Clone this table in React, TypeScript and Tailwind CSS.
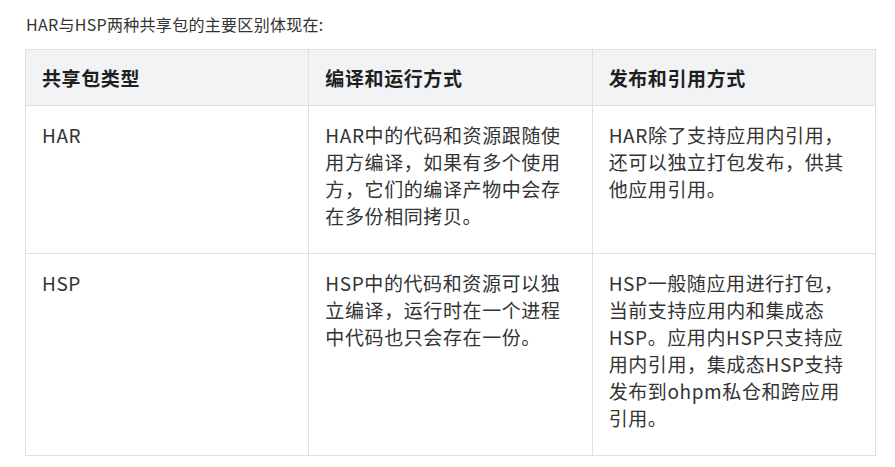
const FONT = "font-['Noto_Sans_CJK_SC','Noto_Sans',sans-serif]";

type Row = { kind: string; build: string[]; publish: string[] };

const rows: Row[] = [
  {
    kind: "HAR",
    build: [
      "HAR中的代码和资源跟随使",
      "用方编译，如果有多个使用",
      "方，它们的编译产物中会存",
      "在多份相同拷贝。",
    ],
    publish: ["HAR除了支持应用内引用，", "还可以独立打包发布，供其", "他应用引用。"],
  },
  {
    kind: "HSP",
    build: ["HSP中的代码和资源可以独", "立编译，运行时在一个进程", "中代码也只会存在一份。"],
    publish: [
      "HSP一般随应用进行打包，",
      "当前支持应用内和集成态",
      "HSP。应用内HSP只支持应",
      "用内引用，集成态HSP支持",
      "发布到ohpm私仓和跨应用",
      "引用。",
    ],
  },
];

function Lines({ lines }: { lines: string[] }) {
  return (
    <>
      {lines.map((line) => (
        <span key={line} className="block whitespace-nowrap">
          {line}
        </span>
      ))}
    </>
  );
}

export default function App() {
  return (
    <div className={`min-h-[467px] w-[895px] bg-white pl-[25px] pt-[11px] text-[#333] ${FONT}`}>
      <p className="pl-px text-[16px] leading-[27px] tracking-[0.3px]">HAR与HSP两种共享包的主要区别体现在:</p>

      <table className="mt-[11px] w-[851px] table-fixed border-collapse border border-[#e0e0e0] text-[19px] leading-[27px] tracking-[0.6px]">
        <thead>
          <tr className="h-[56px] bg-[#f1f3f5] text-left text-[#1f1f1f]">
            <th className="border border-[#e0e0e0] px-4 py-0 font-bold">共享包类型</th>
            <th className="border border-[#e0e0e0] px-4 py-0 font-bold">编译和运行方式</th>
            <th className="border border-[#e0e0e0] px-4 py-0 font-bold">发布和引用方式</th>
          </tr>
        </thead>
        <tbody>
          {rows.map((row) => (
            <tr key={row.kind} className="align-top">
              <td className="border border-[#e0e0e0] px-4 pb-[24px] pt-[15px]">{row.kind}</td>
              <td className="border border-[#e0e0e0] px-4 pb-[24px] pt-[15px]">
                <Lines lines={row.build} />
              </td>
              <td className="border border-[#e0e0e0] px-4 pb-[24px] pt-[15px]">
                <Lines lines={row.publish} />
              </td>
            </tr>
          ))}
        </tbody>
      </table>
    </div>
  );
}
